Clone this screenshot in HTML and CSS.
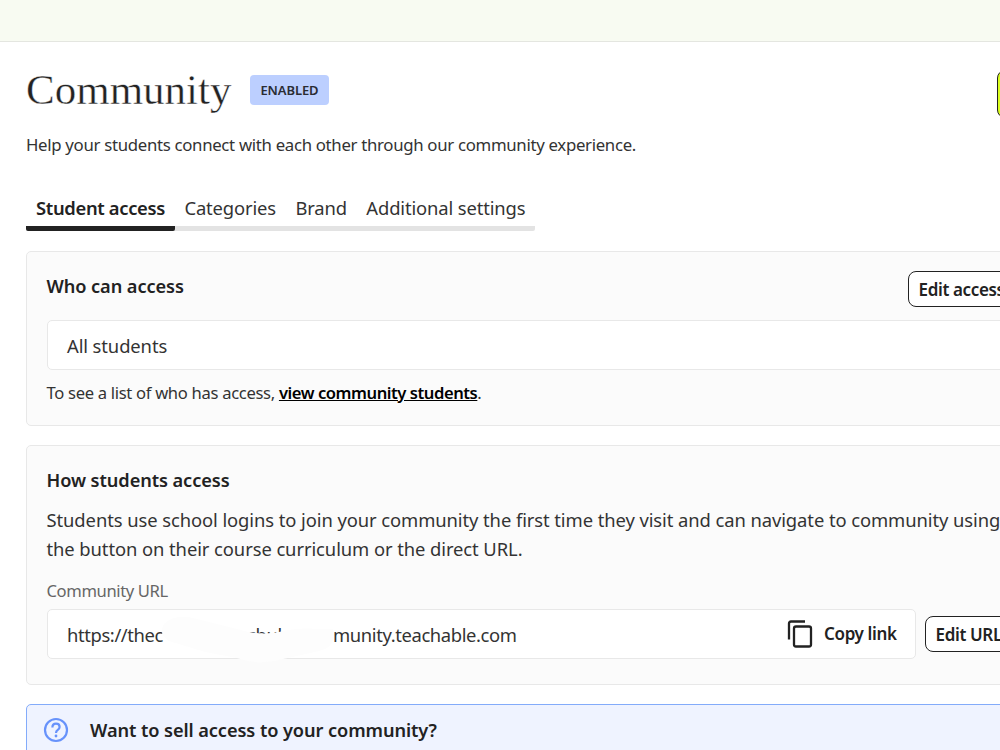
FILE: index.html
```html
<!DOCTYPE html>
<html lang="en">
<head>
  <meta charset="UTF-8" />
  <meta name="viewport" content="width=device-width, initial-scale=1.0"/>
  <title>Community</title>
  <link rel="stylesheet" href="styles.css">
</head>
<body>
  <div class="topbar"></div>

  <main class="page">
    <header class="page-header">
      <h1>Community</h1>
      <span class="badge">ENABLED</span>
      <button class="btn-primary" aria-label="Visit community"></button>
    </header>
    <p class="intro">Help your students connect with each other through our community experience.</p>

    <nav class="tabs">
      <a class="tab active">Student access</a>
      <a class="tab">Categories</a>
      <a class="tab">Brand</a>
      <a class="tab">Additional settings</a>
    </nav>

    <!-- Who can access -->
    <section class="card card-who">
      <div class="card-head">
        <h2>Who can access</h2>
        <button class="btn">Edit access</button>
      </div>
      <div class="field">All students</div>
      <p class="note">To see a list of who has access, <a href="#">view community students</a>.</p>
    </section>

    <!-- How students access -->
    <section class="card card-how">
      <h2>How students access</h2>
      <p class="desc">Students use school logins to join your community the first time they visit and can navigate to community using<br>the button on their course curriculum or the direct URL.</p>
      <label class="label">Community URL</label>
      <div class="url-row">
        <div class="field url-field">
          <span class="url-start">https://thec</span>
          <span class="url-mid">chub</span>
          <span class="url-end">munity.teachable.com</span>
          <svg class="smear" width="190" height="56" viewBox="0 0 190 56">
            <path d="M9 15 Q20 5 38 9 L82 20 Q104 27 124 23 Q142 18 166 20 L178 20 Q182 38 164 42 L128 50 Q104 57 82 49 L50 43 L14 32 Q3 25 9 15Z" />
          </svg>
          <button class="copy">
            <svg width="26" height="28" viewBox="0 0 26 28">
              <path d="M2 19.5V3.5Q2 1.5 4 1.5H18" />
              <rect x="7" y="6.5" width="17" height="20" rx="2" />
            </svg>
            <span>Copy link</span>
          </button>
        </div>
        <button class="btn">Edit URL</button>
      </div>
    </section>

    <!-- Sell access -->
    <section class="callout">
      <svg width="26" height="26" viewBox="0 0 26 26">
        <circle cx="13" cy="13" r="11" />
        <path d="M9.4 10.4Q9.4 6.7 13 6.7T16.6 10Q16.6 11.6 14.8 12.9T13 16" />
        <circle class="dot" cx="13" cy="19" r="1.4" />
      </svg>
      <h2>Want to sell access to your community?</h2>
    </section>
  </main>
</body>
</html>
```

FILE: styles.css
```css
* {
  box-sizing: border-box;
}

body {
  margin: 0;
  height: 750px;
  overflow: hidden;
  font-family: 'Segoe UI', 'Noto Sans', sans-serif;
  font-size: 18.4px;
  letter-spacing: -0.1px;
  background: #fff;
  color: #333;
}

h1, h2, p {
  margin: 0;
}

button {
  font-family: inherit;
  cursor: pointer;
}

.topbar {
  height: 42px;
  background: #f8fbf2;
  border-bottom: 1px solid #e4e6e0;
}

.page {
  width: 1100px;
  padding-left: 26px;
}

.page-header {
  display: flex;
  align-items: center;
  height: 48px;
  margin-top: 28px;
}

h1 {
  width: 224px;
  flex-shrink: 0;
  margin-top: -8px;
  font-family: 'Liberation Serif', serif;
  font-size: 43px;
  font-weight: normal;
  line-height: 48px;
  letter-spacing: 0;
  color: #222;
  -webkit-text-stroke: 0.4px #fff;
}

.badge {
  width: 79px;
  height: 30px;
  margin-top: -9px;
  flex-shrink: 0;
  border-radius: 4px;
  background: #bccfff;
  color: #2a2c33;
  font-size: 13px;
  font-weight: 600;
  line-height: 31px;
  text-align: center;
}

.btn-primary {
  width: 160px;
  height: 48px;
  margin-left: 668px;
  flex-shrink: 0;
  border: 1px solid #222;
  border-radius: 8px;
  background: #dcff1e;
}

.intro {
  margin-top: 15px;
  font-size: 16.8px;
  line-height: 24px;
  letter-spacing: -0.31px;
}

.tabs {
  display: flex;
  gap: 19.4px;
  width: 509px;
  height: 42px;
  margin-top: 32px;
  padding-left: 10px;
  border-bottom: 5px solid #e3e3e3;
  border-radius: 2px;
}

.tab {
  line-height: 38px;
  letter-spacing: -0.13px;
  white-space: nowrap;
}

.tab.active {
  width: 149px;
  height: 42px;
  margin: 0 -10px;
  padding-left: 10px;
  border-bottom: 5px solid #222;
  border-radius: 2px;
  font-weight: 600;
  letter-spacing: -0.34px;
  color: #222;
}

.card {
  padding: 19px 20px 20px 19.5px;
  border: 1px solid #e8e8e8;
  border-radius: 5px;
  background: #fbfbfb;
}

.card-who {
  height: 175px;
  margin-top: 20px;
}

.card-how {
  height: 240px;
  margin-top: 19px;
}

h2 {
  font-size: 18.2px;
  font-weight: 600;
  line-height: 30px;
  letter-spacing: -0.08px;
  color: #222;
}

.card-head {
  display: flex;
  height: 49px;
}

.card-head h2 {
  width: 861px;
}

.btn {
  height: 36px;
  padding: 0 10px;
  flex-shrink: 0;
  border: 1px solid #222;
  border-radius: 8px;
  background: #fff;
  color: #222;
  font-size: 17px;
  font-weight: 600;
  letter-spacing: -0.35px;
  white-space: nowrap;
}

.field {
  height: 50px;
  padding-left: 19.5px;
  border: 1px solid #e8e8e8;
  border-radius: 5px;
  background: #fff;
  line-height: 49px;
}

.note {
  margin-top: 11px;
  font-size: 16.6px;
  line-height: 24px;
  letter-spacing: -0.31px;
}

.note a {
  color: #000;
  font-weight: 600;
  letter-spacing: -0.45px;
}

.desc {
  margin-top: 10px;
  line-height: 29px;
  letter-spacing: -0.08px;
  white-space: nowrap;
}

.label {
  display: block;
  margin-top: 16px;
  font-size: 16.6px;
  line-height: 24px;
  letter-spacing: -0.38px;
  color: #666;
}

.url-row {
  display: flex;
  align-items: center;
  gap: 9px;
  margin-top: 6px;
}

.url-field {
  position: relative;
  display: flex;
  width: 869px;
  flex-shrink: 0;
  letter-spacing: -0.38px;
}

.url-start {
  width: 180px;
}

.url-mid {
  width: 86px;
}

.url-end {
  width: 454px;
}

/* brushed-out part of the address */
.smear {
  position: absolute;
  left: 107px;
  top: -1px;
  fill: #fdfdfd;
}

.copy {
  display: flex;
  align-items: center;
  gap: 11px;
  padding: 0;
  border: none;
  background: none;
  color: #222;
  font-size: 17px;
  font-weight: 600;
  letter-spacing: -0.35px;
  white-space: nowrap;
}

.copy span {
  margin-top: -2px;
}

.copy svg {
  fill: none;
  stroke: #222;
  stroke-width: 2.3;
}

.callout {
  display: flex;
  gap: 21px;
  height: 90px;
  margin-top: 19px;
  padding: 12px 16px;
  border: 1px solid #83abfa;
  border-radius: 5px;
  background: #eff3ff;
}

.callout h2 {
  margin-top: -2px;
}

.callout svg {
  fill: none;
  stroke: #6792fb;
  stroke-width: 2.2;
}

.callout .dot {
  fill: #6792fb;
  stroke: none;
}
```
